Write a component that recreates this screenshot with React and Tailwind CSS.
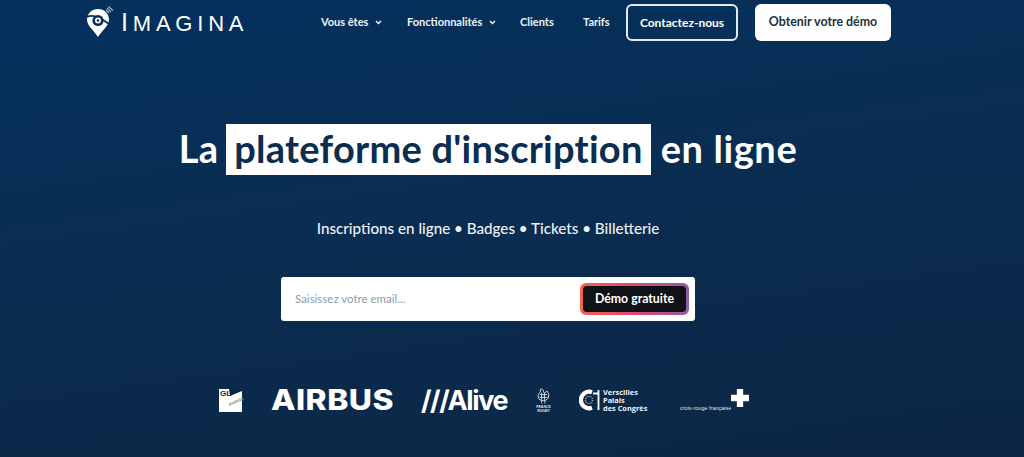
import React from "react";

const Chevron = () => (
  <svg width="7" height="5" viewBox="0 0 8 6" fill="none" stroke="currentColor" strokeWidth="1.8" className="ml-[7px] mt-[1px]">
    <path d="M1 1.2 L4 4.2 L7 1.2" />
  </svg>
);

const Logo = () => (
  <svg width="30" height="36" viewBox="0 0 30 36" className="shrink-0">
    <path d="M13 5 C6.5 5 2 9.8 2 15.5 C2 22 8.5 26 13 33 C17.5 26 24 22 24 15.5 C24 9.8 19.5 5 13 5 Z" fill="#fff" />
    <path d="M2 13 C7 10 16 14 24 20" stroke="#05305c" strokeWidth="1.6" fill="none" />
    <circle cx="13" cy="16.5" r="5.6" fill="#05305c" />
    <circle cx="13" cy="16.5" r="3" fill="#fff" />
    <circle cx="13" cy="16.5" r="1.3" fill="#05305c" />
    <path d="M21 6 L24 9 M22 4 L26 8 M23.5 2.5 L28 6.5" stroke="#a9b6c6" strokeWidth="1.1" fill="none" />
  </svg>
);

const GlEvents = () => (
  <div className="relative w-[23px] h-[23px] shrink-0 bg-white">
    <svg width="23" height="23" viewBox="0 0 23 23" className="absolute inset-0">
      <path d="M10 0 H23 V2 L11 7 Z" fill="#0b2644" />
    </svg>
    <span className="absolute left-[1px] top-[0px] text-[8px] leading-[9px] font-black text-[#0b2644] font-['Liberation_Sans',sans-serif]">GL</span>
    <span className="absolute left-[9px] top-[9px] text-[5px] leading-[6px] font-bold text-[#6d7f94] -rotate-[24deg] font-['Liberation_Sans',sans-serif]">events</span>
  </div>
);

const Rooster = () => (
  <div className="flex flex-col items-center w-[15px] shrink-0">
    <svg width="13" height="16" viewBox="0 0 14 17" fill="none" stroke="#e8edf2" strokeWidth="1">
      <path d="M5 1 C3 1 3 3 4 4 C1 6 0 10 3 12.5 C5 14 9 14 11 12 C13.5 9.5 13 5 10.5 3 C9.5 5 8 6 7 4.5 C7 3 7 1.5 5 1 Z" />
      <path d="M3 7 L11 7 M2.5 10 L11.5 10 M5 5 L5 13 M8 5 L8 13 M5 14 L5 16.5 M8.5 14 L8.5 16.5" strokeWidth="0.9" />
    </svg>
    <span className="mt-[1px] text-[3.5px] leading-[4px] text-[#dfe5ec] font-bold text-center whitespace-nowrap font-['Liberation_Sans',sans-serif]">FRANCE<br />RUGBY</span>
  </div>
);

const Versailles = () => (
  <div className="flex items-center gap-[3px] shrink-0">
    <svg width="21" height="22" viewBox="0 0 21 22" fill="none">
      <path d="M13 3.2 A8.3 8.3 0 1 0 13 18.8" stroke="#fff" strokeWidth="4.2" />
      <path d="M19.5 1 V21 M14 4.5 H19.5" stroke="#fff" strokeWidth="1.8" />
      <circle cx="10" cy="11" r="3.6" stroke="#9fb0c2" strokeWidth="1.4" strokeDasharray="1 1" />
    </svg>
    <div className="w-[47px] text-[7.4px] leading-[8px] font-bold text-[#f0f3f6] font-['Open_Sans',sans-serif] whitespace-nowrap">
      Verscilles<br />Palais<br />des Congrès
    </div>
  </div>
);

export default function App() {
  return (
    <div className="w-[1024px] h-[457px] overflow-hidden bg-[linear-gradient(172deg,#04305c_0%,#072f58_22%,#0a2d52_45%,#0b2a4b_70%,#0b2644_100%)] text-white font-['Lato',sans-serif]">
      <header className="flex items-center h-[44px] pl-[85px] pt-[1px]">
        <div className="flex items-center gap-[6px] w-[236px] -mt-[1px]">
          <Logo />
          <span className="font-['Liberation_Sans',sans-serif] text-[22px] leading-none tracking-[4.8px] text-white whitespace-nowrap"><span className="text-[25px]">I</span>MAGINA</span>
        </div>
        <nav className="flex items-center text-[11px] font-bold text-[#eef2f6] -mt-[1px]">
          <a className="flex items-center w-[86px]">Vous êtes<Chevron /></a>
          <a className="flex items-center w-[113px] whitespace-nowrap">Fonctionnalités<Chevron /></a>
          <a className="w-[63px]">Clients</a>
          <a className="w-[43px]">Tarifs</a>
        </nav>
        <a className="flex items-center justify-center w-[112px] h-[37px] rounded-[6px] border-2 border-[#e6ebf1] text-[12px] font-bold text-white">Contactez-nous</a>
        <a className="flex items-center justify-center w-[136px] h-[37px] ml-[17px] rounded-[6px] bg-white text-[#22303f] text-[12.4px] font-bold">Obtenir votre démo</a>
      </header>

      <main className="w-[976px] flex flex-col items-center">
        <h1 className="mt-[80px] flex items-center h-[51px] text-[38px] tracking-[0.25px] font-bold leading-none whitespace-nowrap">
          <span className="pb-[4px]">La</span>
          <span className="flex items-center h-[51px] ml-[8px] mr-[10px] px-[8px] pb-[4px] bg-white text-[#0b2d50]">plateforme d'inscription</span>
          <span className="pb-[4px] tracking-[0.6px]">en ligne</span>
        </h1>
        <p className="mt-[42px] text-[15.2px] leading-[22px] text-[#eef2f6] font-medium">Inscriptions en ligne • Badges • Tickets • Billetterie</p>
        <form className="mt-[38px] flex items-center justify-between w-[414px] h-[44px] pl-[14px] pr-[6px] bg-white rounded-[3px]">
          <span className="text-[11.5px] text-[#8c9bab]">Saisissez votre email...</span>
          <div className="p-[3px] rounded-[6px] bg-[linear-gradient(90deg,#f2654e_0%,#e8476a_45%,#8c5fa8_100%)]">
            <div className="flex items-center justify-center w-[103px] h-[26px] rounded-[4px] bg-[#101216] text-[12.3px] font-bold text-white">Démo gratuite</div>
          </div>
        </form>
        <div className="mt-[59px] mr-[7px] flex items-center h-[40px] w-[531px] text-white">
          <GlEvents />
          <span className="ml-[29px] w-[150px] text-[28px] font-extrabold leading-none tracking-[0.4px] origin-left scale-x-[1.14] font-['Inter',sans-serif] shrink-0">AIRBUS</span>
          <span className="w-[115px] text-[27px] font-bold leading-none tracking-[-1.4px] font-['Inter',sans-serif] shrink-0">///Alive</span>
          <Rooster />
          <div className="ml-[28px]"><Versailles /></div>
          <div className="ml-[30px] self-stretch flex items-start shrink-0">
            <span className="w-[51px] mt-[25px] text-[5.5px] leading-[6px] text-[#dfe5ec] whitespace-nowrap font-['Liberation_Sans',sans-serif]">croix-rouge française</span>
            <svg width="18" height="18" viewBox="0 0 20 20" className="mt-[9px]"><path d="M6.5 0 H13.5 V6.5 H20 V13.5 H13.5 V20 H6.5 V13.5 H0 V6.5 H6.5 Z" fill="#fff" /></svg>
          </div>
        </div>
      </main>
    </div>
  );
}
